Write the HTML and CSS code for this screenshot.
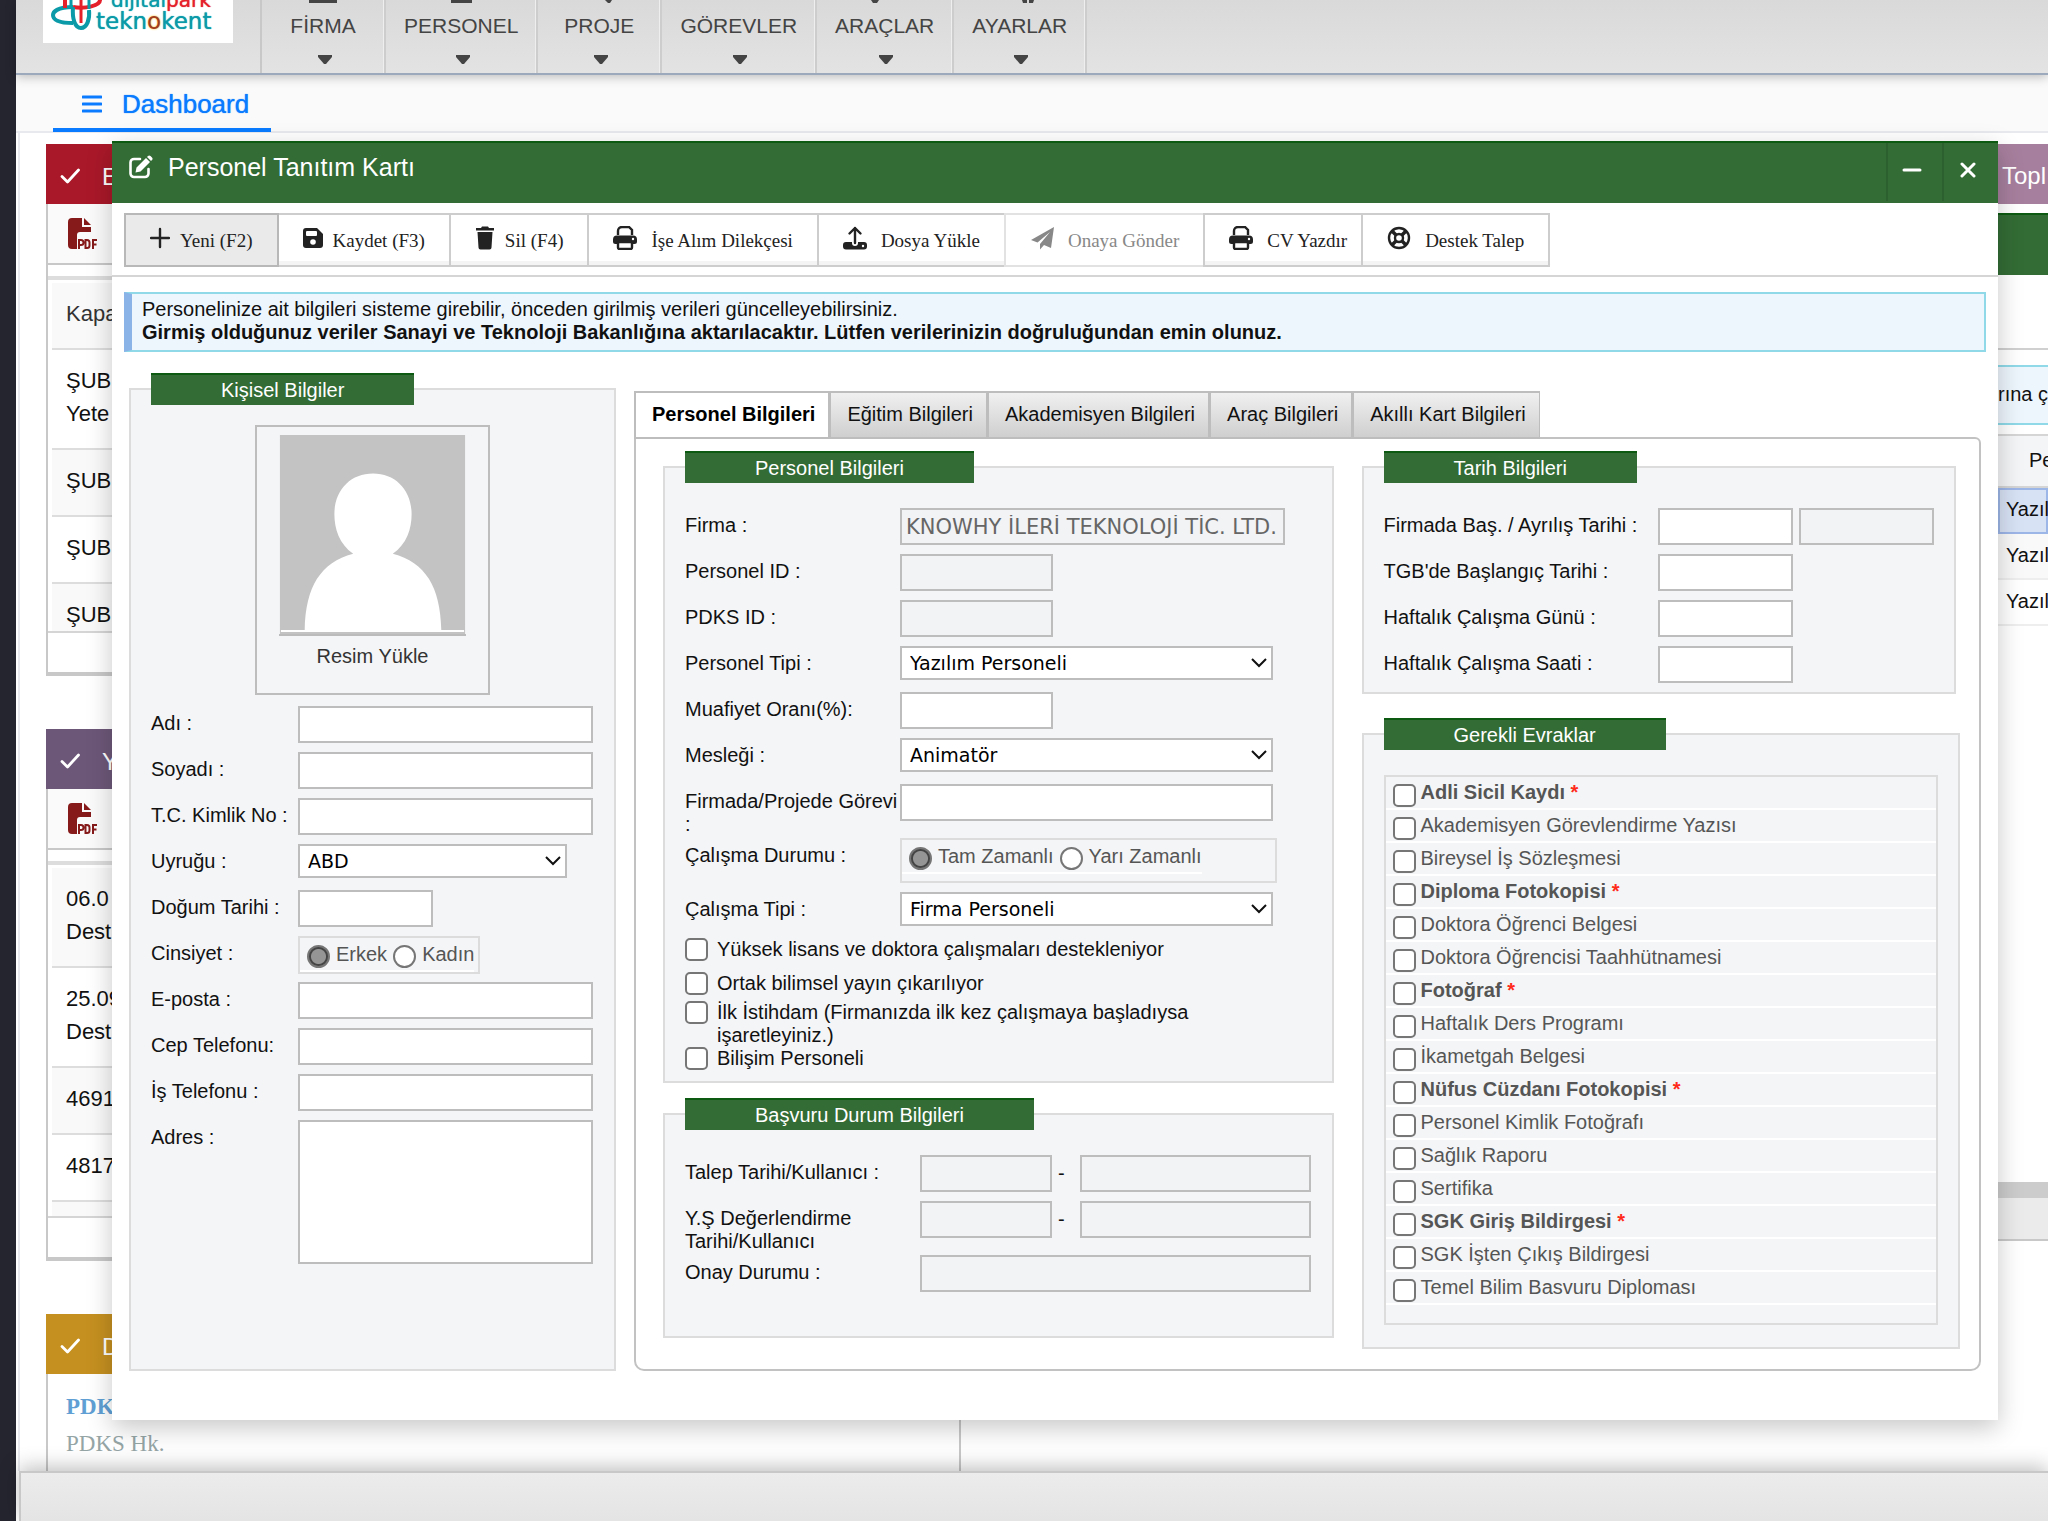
FILE: index.html
```html
<!DOCTYPE html>
<html lang="tr">
<head>
<meta charset="utf-8">
<title>Personel Tanıtım Kartı</title>
<link rel="stylesheet" href="styles.css">
</head>
<body>
<svg class="sprite" aria-hidden="true">
  <symbol id="i-check" viewBox="0 0 20 16"><path d="M2 8.500l5.500 5.500L18.500 2" fill="none" stroke="currentColor" stroke-width="2.800" stroke-linecap="round" stroke-linejoin="round"/></symbol>
  <symbol id="i-printer" viewBox="0 0 24 24"><path d="M5 9V5a4 4 0 0 1 4-4h7l3 3v5" fill="none" stroke="currentColor" stroke-width="2.400"/><path d="M4 9.500h16a4 4 0 0 1 4 4v2a2.500 2.500 0 0 1-2.500 2.500H2.500A2.500 2.500 0 0 1 0 15.500v-2a4 4 0 0 1 4-4z" fill="currentColor"/><rect x="5" y="16" width="14" height="7" rx="1.500" fill="#fff" stroke="currentColor" stroke-width="2.400"/><circle cx="20" cy="13" r="1.200" fill="#fff"/></symbol>
  <symbol id="i-pdf" viewBox="0 0 30 32"><path d="M4 0h10v9h9v5H12a3 3 0 0 0-3 3v14H4a4 4 0 0 1-4-4V4a4 4 0 0 1 4-4z" fill="#861a1a"/><path d="M16 0l7 7h-7z" fill="#861a1a"/><g fill="none" stroke="#861a1a" stroke-width="2"><path d="M11 31v-9h2a2.500 2.500 0 0 1 0 5h-2M17.500 22v8h1.500a2.500 2.500 0 0 0 2.500-2.500v-3a2.500 2.500 0 0 0-2.500-2.500zM25 31v-9h4M25 26.500h3.500"/></g></symbol>
  <symbol id="i-chevron" viewBox="0 0 16 10"><path d="M1 1l7 7 7-7" fill="none" stroke="#111" stroke-width="2"/></symbol>
</svg>

<div class="rail"></div>
<div class="app">
  <header class="topbar">
    <a class="logo" href="#" aria-label="dijitalpark teknokent">
      <svg class="logo-mark" viewBox="0 0 54 32" aria-hidden="true"><g fill="none" stroke-width="4"><path d="M22 7C6 7 2 12 2 15c0 6 9 8 20 8" stroke="#0a9aa8"/><path d="M14 0v8" stroke="#e5202b"/><path d="M22 7c12 2 28-1 27-8" stroke="#e5202b"/><path d="M22 7c-1 12 2 21 8 21s9-9 8-18" stroke="#0a9aa8"/><path d="M30 0v23" stroke="#e5202b" stroke-width="3"/><path d="M20 0v8M38 0v9" stroke="#0a9aa8" stroke-width="3"/></g></svg>
      <span class="logo-name">
        <span class="logo-top">dijital<b>park</b></span>
        <span class="logo-bottom">tekn<i>o</i>kent</span>
      </span>
    </a>
    <nav class="menu">
      <button type="button"><svg class="mi" viewBox="0 0 30 3"><path d="M1 0h28v3H1z"/></svg>FİRMA<svg class="caret" viewBox="0 0 14 9"><path d="M0 0h14v2L8 9H6L0 2z"/></svg></button>
      <button type="button"><svg class="mi" viewBox="0 0 30 3"><path d="M5 0h21v3H5z"/></svg>PERSONEL<svg class="caret" viewBox="0 0 14 9"><path d="M0 0h14v2L8 9H6L0 2z"/></svg></button>
      <button type="button"><svg class="mi" viewBox="0 0 30 3"><path d="M21 0h7l-2 3h-2z"/></svg>PROJE<svg class="caret" viewBox="0 0 14 9"><path d="M0 0h14v2L8 9H6L0 2z"/></svg></button>
      <button type="button"><svg class="mi" viewBox="0 0 30 3"></svg>GÖREVLER<svg class="caret" viewBox="0 0 14 9"><path d="M0 0h14v2L8 9H6L0 2z"/></svg></button>
      <button type="button"><svg class="mi" viewBox="0 0 30 3"><path d="M1 0h8l-2 3H3z"/></svg>ARAÇLAR<svg class="caret" viewBox="0 0 14 9"><path d="M0 0h14v2L8 9H6L0 2z"/></svg></button>
      <button type="button"><svg class="mi" viewBox="0 0 30 3"><path d="M17 0h5v3h-4zM24 0h5l-1 3h-4z"/></svg>AYARLAR<svg class="caret" viewBox="0 0 14 9"><path d="M0 0h14v2L8 9H6L0 2z"/></svg></button>
    </nav>
  </header>

  <div class="pagetabs">
    <a class="pagetab" href="#"><svg class="burger" viewBox="0 0 20 18"><path d="M1 2h18M1 9h18M1 16h18" stroke="currentColor" stroke-width="3" stroke-linecap="round"/></svg>Dashboard</a>
  </div>

  <main class="desk">
    <div class="col-left">
      <section class="card">
        <h2 class="card-head red"><svg class="check"><use href="#i-check"/></svg>E</h2>
        <div class="card-tools"><svg class="pdf"><use href="#i-pdf"/></svg></div>
        <div class="rows">
          <div class="row head">Kapa</div>
          <div class="row tall">ŞUB<br>Yete</div>
          <div class="row alt">ŞUB</div>
          <div class="row">ŞUB</div>
          <div class="row alt">ŞUB</div>
        </div>
        <div class="card-foot"></div>
      </section>
      <section class="card">
        <h2 class="card-head purple"><svg class="check"><use href="#i-check"/></svg>Y</h2>
        <div class="card-tools"><svg class="pdf"><use href="#i-pdf"/></svg></div>
        <div class="rows">
          <div class="row tall alt">06.0<br>Dest</div>
          <div class="row tall">25.09<br>Dest</div>
          <div class="row alt">4691</div>
          <div class="row">4817</div>
          <div class="row alt"></div>
        </div>
        <div class="card-foot"></div>
      </section>
      <section class="card news">
        <h2 class="card-head gold"><svg class="check"><use href="#i-check"/></svg>D</h2>
        <p class="news-title">PDK</p>
        <p class="news-sub">PDKS Hk.</p>
      </section>
    </div>
    <div class="col-right">
      <div class="r-title">Topl</div>
      <div class="r-green"></div>
      <div class="r-bar"></div>
      <div class="r-note">rına ç</div>
      <div class="r-th">Pe</div>
      <div class="r-td sel">Yazıl</div>
      <div class="r-td odd">Yazıl</div>
      <div class="r-td">Yazıl</div>
      <div class="r-scroll"></div>
      <div class="r-foot"></div>
    </div>
  </main>
  <footer class="taskbar"></footer>

  <section class="window" role="dialog" aria-label="Personel Tanıtım Kartı">
    <header class="win-head">
      <svg class="edit" viewBox="0 0 24 24"><path d="M11 4H5a3.500 3.500 0 0 0-3.500 3.500v11A3.500 3.500 0 0 0 5 22h11a3.500 3.500 0 0 0 3.500-3.500V14" fill="none" stroke="#fff" stroke-width="2.600" stroke-linecap="round"/><path d="M17 3l4 4-9.500 9.500-5 1 1-5zM18 2l1-1a1.800 1.800 0 0 1 2.500 0L23 2.500A1.800 1.800 0 0 1 23 5l-1 1z" fill="#fff"/></svg>
      <h1>Personel Tanıtım Kartı</h1>
      <button type="button" aria-label="Küçült"><svg viewBox="0 0 20 16"><path d="M2 8h16" stroke="#fff" stroke-width="3" stroke-linecap="round"/></svg></button>
      <button type="button" aria-label="Kapat"><svg viewBox="0 0 20 16"><path d="M4 2l12 12M16 2L4 14" stroke="#fff" stroke-width="3" stroke-linecap="round"/></svg></button>
    </header>

    <div class="toolbar">
      <button type="button" class="small on"><svg viewBox="0 0 20 24"><path d="M10 3v18M1 12h18" stroke="currentColor" stroke-width="2.400" stroke-linecap="round"/></svg>Yeni (F2)</button>
      <button type="button" class="small"><svg viewBox="0 0 20 24"><path d="M3 2h11l6 6v11a3 3 0 0 1-3 3H3a3 3 0 0 1-3-3V5a3 3 0 0 1 3-3z" fill="currentColor"/><rect x="3" y="5" width="11" height="5" rx="1" fill="#fff"/><circle cx="10" cy="16" r="2.800" fill="#fff"/></svg>Kaydet (F3)</button>
      <button type="button" class="small"><svg viewBox="0 0 20 24"><path d="M1 2h5l1-1.500h6L14 2h5v2.500H1zM2.500 6h15l-1 15.500a2 2 0 0 1-2 2h-9a2 2 0 0 1-2-2z" fill="currentColor"/></svg>Sil (F4)</button>
      <button type="button"><svg viewBox="0 0 24 24"><use href="#i-printer"/></svg>İşe Alım Dilekçesi</button>
      <button type="button"><svg viewBox="0 0 24 24"><path d="M12 17V2M6.500 7.500L12 2l5.500 5.500" fill="none" stroke="currentColor" stroke-width="2.400" stroke-linecap="round" stroke-linejoin="round"/><path d="M3 16h6v1a3 3 0 0 0 6 0v-1h6a3 3 0 0 1 3 3v1.500a3 3 0 0 1-3 3H3a3 3 0 0 1-3-3V19a3 3 0 0 1 3-3z" fill="currentColor"/><circle cx="20" cy="20" r="1.200" fill="#fff"/></svg>Dosya Yükle</button>
      <button type="button" disabled><svg viewBox="0 0 24 24"><path d="M24 1l-3 21-7-3-4 4.500V18L20 6 7.500 16.500 1 14z" fill="currentColor"/></svg>Onaya Gönder</button>
      <button type="button" class="tight"><svg viewBox="0 0 24 24"><use href="#i-printer"/></svg>CV Yazdır</button>
      <button type="button"><svg viewBox="0 0 24 24"><g fill="none" stroke="currentColor" stroke-width="2.400"><circle cx="12" cy="12" r="10"/><circle cx="12" cy="12" r="4"/><path d="M5 5l4 4M19 5l-4 4M5 19l4-4M19 19l-4-4" stroke-width="3.500"/></g></svg>Destek Talep</button>
    </div>

    <form class="win-body">
      <div class="note">Personelinize ait bilgileri sisteme girebilir, önceden girilmiş verileri güncelleyebilirsiniz.<br><b>Girmiş olduğunuz veriler Sanayi ve Teknoloji Bakanlığına aktarılacaktır. Lütfen verilerinizin doğruluğundan emin olunuz.</b></div>

      <div class="columns">
        <fieldset class="group person">
          <legend>Kişisel Bilgiler</legend>
          <div class="photo">
            <svg viewBox="0 0 187 201" aria-hidden="true"><rect width="187" height="201" fill="#c3c3c3"/><path d="M25 197c1-44 16-68 49-77-14-10-19-25-19-40 0-24 16-41 39-41s39 17 39 41c0 15-5 30-19 40 33 9 48 33 49 77z" fill="#fff"/><path d="M1 198h185" stroke="#fff" stroke-width="2"/></svg>
            <span>Resim Yükle</span>
          </div>
          <div class="line"><label for="ad">Adı :</label><input id="ad" class="w-full" type="text"></div>
          <div class="line"><label for="soyad">Soyadı :</label><input id="soyad" class="w-full" type="text"></div>
          <div class="line"><label for="tc">T.C. Kimlik No :</label><input id="tc" class="w-full" type="text"></div>
          <div class="line"><label for="uyruk">Uyruğu :</label><span class="select w-country"><select id="uyruk"><option>ABD</option></select><svg><use href="#i-chevron"/></svg></span></div>
          <div class="line"><label for="dogum">Doğum Tarihi :</label><input id="dogum" class="w-date" type="text"></div>
          <div class="line"><span class="lbl">Cinsiyet :</span><span class="radios"><span><label><input type="radio" name="cins" checked>Erkek</label><label><input type="radio" name="cins">Kadın</label></span></span></div>
          <div class="line"><label for="eposta">E-posta :</label><input id="eposta" class="w-full" type="text"></div>
          <div class="line"><label for="cep">Cep Telefonu:</label><input id="cep" class="w-full" type="text"></div>
          <div class="line"><label for="istel">İş Telefonu :</label><input id="istel" class="w-full" type="text"></div>
          <div class="line"><label for="adres">Adres :</label><textarea id="adres" class="w-full"></textarea></div>
        </fieldset>

        <div class="tabs">
          <div class="tablist" role="tablist">
            <button type="button" role="tab" aria-selected="true">Personel Bilgileri</button>
            <button type="button" role="tab">Eğitim Bilgileri</button>
            <button type="button" role="tab">Akademisyen Bilgileri</button>
            <button type="button" role="tab">Araç Bilgileri</button>
            <button type="button" role="tab">Akıllı Kart Bilgileri</button>
          </div>
          <div class="tabpanel" role="tabpanel">
            <div class="stack">
              <fieldset class="group staff">
                <legend>Personel Bilgileri</legend>
                <div class="line"><label for="firma">Firma :</label><input id="firma" class="w-firm" type="text" value="KNOWHY İLERİ TEKNOLOJİ TİC. LTD." disabled></div>
                <div class="line"><label for="pid">Personel ID :</label><input id="pid" class="w-id" type="text" disabled></div>
                <div class="line"><label for="pdks">PDKS ID :</label><input id="pdks" class="w-id" type="text" disabled></div>
                <div class="line"><label for="tip">Personel Tipi :</label><span class="select w-wide"><select id="tip"><option>Yazılım Personeli</option></select><svg><use href="#i-chevron"/></svg></span></div>
                <div class="line"><label for="muaf">Muafiyet Oranı(%):</label><input id="muaf" class="w-id" type="text"></div>
                <div class="line"><label for="meslek">Mesleği :</label><span class="select w-wide"><select id="meslek"><option>Animatör</option></select><svg><use href="#i-chevron"/></svg></span></div>
                <div class="line"><label for="gorev">Firmada/Projede Görevi :</label><input id="gorev" class="w-wide" type="text"></div>
                <div class="line"><span class="lbl">Çalışma Durumu :</span><span class="radios roomy"><span><label><input type="radio" name="durum" checked>Tam Zamanlı</label><label><input type="radio" name="durum">Yarı Zamanlı</label></span></span></div>
                <div class="line"><label for="ctip">Çalışma Tipi :</label><span class="select w-wide"><select id="ctip"><option>Firma Personeli</option></select><svg><use href="#i-chevron"/></svg></span></div>
                <label class="tick spaced"><input type="checkbox"><span>Yüksek lisans ve doktora çalışmaları destekleniyor</span></label>
                <label class="tick close"><input type="checkbox"><span>Ortak bilimsel yayın çıkarılıyor</span></label>
                <label class="tick"><input type="checkbox"><span>İlk İstihdam (Firmanızda ilk kez çalışmaya başladıysa işaretleyiniz.)</span></label>
                <label class="tick"><input type="checkbox"><span>Bilişim Personeli</span></label>
              </fieldset>

              <fieldset class="group status">
                <legend>Başvuru Durum Bilgileri</legend>
                <div class="line"><label for="talep">Talep Tarihi/Kullanıcı :</label><span class="pair"><input id="talep" class="w-day" type="text" disabled><span>-</span><input class="w-user" type="text" aria-label="Talep kullanıcı" disabled></span></div>
                <div class="line"><label for="deger">Y.Ş Değerlendirme Tarihi/Kullanıcı</label><span class="pair"><input id="deger" class="w-day" type="text" disabled><span>-</span><input class="w-user" type="text" aria-label="Değerlendirme kullanıcı" disabled></span></div>
                <div class="line"><label for="onay">Onay Durumu :</label><input id="onay" class="w-approve" type="text" disabled></div>
              </fieldset>
            </div>

            <div class="stack dates-docs">
              <fieldset class="group dates">
                <legend>Tarih Bilgileri</legend>
                <div class="line"><label for="bas">Firmada Baş. / Ayrılış Tarihi :</label><span class="two"><input id="bas" class="w-date" type="text"><input class="w-date" type="text" aria-label="Ayrılış Tarihi" disabled></span></div>
                <div class="line"><label for="tgb">TGB'de Başlangıç Tarihi :</label><input id="tgb" class="w-date" type="text"></div>
                <div class="line"><label for="gun">Haftalık Çalışma Günü :</label><input id="gun" class="w-date" type="text"></div>
                <div class="line"><label for="saat">Haftalık Çalışma Saati :</label><input id="saat" class="w-date" type="text"></div>
              </fieldset>

              <fieldset class="group docs">
                <legend>Gerekli Evraklar</legend>
                <div class="doclist">
                  <label><input type="checkbox"><b>Adli Sicil Kaydı <i>*</i></b></label>
                  <label><input type="checkbox">Akademisyen Görevlendirme Yazısı</label>
                  <label><input type="checkbox">Bireysel İş Sözleşmesi</label>
                  <label><input type="checkbox"><b>Diploma Fotokopisi <i>*</i></b></label>
                  <label><input type="checkbox">Doktora Öğrenci Belgesi</label>
                  <label><input type="checkbox">Doktora Öğrencisi Taahhütnamesi</label>
                  <label><input type="checkbox"><b>Fotoğraf <i>*</i></b></label>
                  <label><input type="checkbox">Haftalık Ders Programı</label>
                  <label><input type="checkbox">İkametgah Belgesi</label>
                  <label><input type="checkbox"><b>Nüfus Cüzdanı Fotokopisi <i>*</i></b></label>
                  <label><input type="checkbox">Personel Kimlik Fotoğrafı</label>
                  <label><input type="checkbox">Sağlık Raporu</label>
                  <label><input type="checkbox">Sertifika</label>
                  <label><input type="checkbox"><b>SGK Giriş Bildirgesi <i>*</i></b></label>
                  <label><input type="checkbox">SGK İşten Çıkış Bildirgesi</label>
                  <label><input type="checkbox">Temel Bilim Basvuru Diploması</label>
                </div>
              </fieldset>
            </div>
          </div>
        </div>
      </div>
    </form>
  </section>
</div>
</body>
</html>
```
FILE: styles.css
```css
* { box-sizing: border-box; }

body {
  margin: 0;
  display: flex;
  height: 100vh;
  overflow: hidden;
  background: #fff;
  color: #111;
  font: 20px/23px "Liberation Sans", Arial, sans-serif;
}

button, input, select, textarea { font: inherit; color: inherit; margin: 0; }
h1, h2, p { margin: 0; font-weight: 400; }
svg { display: block; flex: none; }
.sprite { display: none; }

.rail { width: 16px; flex: none; background: #252530; }
.app { position: relative; flex: 1; min-width: 0; display: flex; flex-direction: column; }

/* top menu */
.topbar {
  display: flex;
  height: 75px;
  flex: none;
  position: relative;
  background: linear-gradient(#d9d9d9, #e3e3e3);
  border-bottom: 2px solid #9ca8bc;
  box-shadow: 0 2px 10px rgba(0, 0, 0, .25);
}
.logo {
  display: flex;
  width: 190px;
  height: 43px;
  margin: 0 27px;
  padding-left: 8px;
  overflow: hidden;
  background: #fff;
  color: #0a9aa8;
  text-decoration: none;
  font-family: "DejaVu Sans", Verdana, sans-serif;
}
.logo-mark { width: 54px; height: 32px; }
.logo-name { display: flex; flex-direction: column; justify-content: flex-end; height: 32px; margin-left: -9px; text-shadow: 0 0 1px currentColor; }
.logo-top { font-size: 20px; line-height: 20px; margin-left: 15px; }
.logo-top b { font-weight: 400; color: #e5202b; }
.logo-bottom { font-size: 23px; line-height: 22px; }
.logo-bottom i { font-style: normal; color: #a03a20; text-shadow: 0 0 2px #f3b200; }
.menu { display: flex; border-left: 2px solid #c8c8c8; }
.menu button {
  display: flex;
  flex-direction: column;
  align-items: center;
  min-width: 124px;
  padding: 0 18px;
  border: 0;
  border-right: 2px solid #cdcdcd;
  box-shadow: inset -1px 0 #eee;
  background: none;
  color: #444;
  font-size: 21px;
  line-height: 24px;
}
.menu svg { fill: #444; }
.mi { width: 30px; height: 3px; margin-bottom: 11px; }
.caret { width: 14px; height: 9px; margin: 17px 0 0 3px; }

.pagetabs { height: 58px; flex: none; padding-left: 37px; background: #fafafa; border-bottom: 2px solid #e8e9ee; }
.pagetab {
  display: inline-flex;
  align-items: center;
  gap: 20px;
  height: 57px;
  padding: 5px 22px 0 29px;
  border-bottom: 4px solid #0a7bff;
  color: #0a7bff;
  font-size: 26px;
  line-height: 28px;
  text-decoration: none;
  text-shadow: 0 0 1px #0a7bff;
}
.burger { width: 20px; height: 18px; }

/* windows behind the dialog */
.desk {
  flex: 1;
  min-height: 0;
  display: flex;
  justify-content: space-between;
  overflow: hidden;
  margin-left: 2px;
  padding: 11px 0 0 26px;
  border-left: 2px solid #e8e9ee;
}
.col-left { flex: 0 0 915px; display: flex; flex-direction: column; gap: 53px; font-size: 22px; line-height: 33px; }
.card { border: 2px solid #c8c8c8; border-top: 0; border-bottom-width: 4px; background: #fff; }
.news { flex: none; height: 220px; }
.card-head { display: flex; align-items: center; gap: 22px; height: 60px; margin: 0 -2px; padding: 4px 14px 0; color: #fff; font-size: 24px; }
.red { background: #a91829; }
.purple { background: #6d5779; }
.gold { background: #c59020; }
.check { width: 20px; height: 16px; }
.card-tools { height: 61px; padding: 14px 20px; background: #fafafa; border-bottom: 2px solid #c8c8c8; }
.pdf { width: 30px; height: 32px; }
.rows { margin-top: 11px; padding: 3px 0 0 4px; border-top: 4px solid #ddd; height: 357px; overflow: hidden; border-bottom: 2px solid #d5d5d5; }
.row { height: 67px; padding: 14px 14px; border-bottom: 2px solid #ddd; background: #fff; }
.tall { height: 100px; }
.alt, .head { background: #f9f9f9; }
.head { color: #333; }
.card-foot { height: 39px; }
.news-title, .news-sub { padding-left: 18px; font-family: "Liberation Serif", "Times New Roman", serif; font-size: 23px; line-height: 37px; }
.news-title { padding-top: 14px; color: #5f9fd4; font-weight: 700; }
.news-sub { color: #95a5a6; }

.col-right { width: 50px; overflow: hidden; white-space: nowrap; }
.r-title { height: 60px; padding: 16px 4px; background: #a77f9e; color: #fff; font-size: 24px; line-height: 32px; }
.r-green { height: 62px; margin-top: 9px; background: #336c35; border-top: 2px solid #0d5a12; }
.r-bar { height: 75px; border-bottom: 2px solid #d0d0d0; }
.r-note { height: 60px; margin: 15px 0 9px; padding: 16px 0; background: #eef6fd; border: solid #8fd9e8; border-width: 2px 0; }
.r-th { height: 54px; padding: 13px 0 13px 31px; background: #f4f5f7; border: solid #d5d5d5; border-width: 2px 0; }
.r-td { height: 46px; padding: 10px 8px; border-bottom: 2px solid #eee; }
.odd { background: #f9f9f9; }
.sel { background: #d7e2f5; border: 2px solid #9db6e8; padding: 8px 6px; }
.r-scroll { height: 16px; margin-top: 556px; background: #ccc; }
.r-foot { height: 43px; background: #ebebeb; border-bottom: 2px solid #c8c8c8; }

.taskbar {
  position: relative;
  height: 50px;
  flex: none;
  margin-left: 3px;
  background: linear-gradient(#ececec, #e4e4e4);
  border: solid #c8c8c8;
  border-width: 2px 0 0 2px;
  box-shadow: 0 -4px 20px rgba(0, 0, 0, .25);
}

/* dialog */
.window {
  position: absolute;
  top: 141px;
  left: 96px;
  right: 50px;
  background: #fff;
  box-shadow: 0 8px 24px rgba(0, 0, 0, .22);
}
.win-head { display: flex; height: 62px; padding-left: 17px; background: #336c35; border-top: 2px solid #0d5a12; color: #fff; }
.edit { width: 24px; height: 24px; margin: 12px 15px 0 0; }
.win-head h1 { flex: 1; padding-top: 9px; font-size: 25px; line-height: 30px; }
.win-head button { display: flex; align-items: center; width: 56px; height: 58px; padding: 0 14px 4px; border: 0; border-left: 2px solid #2d602f; background: none; }
.win-head button svg { width: 20px; height: 16px; }

.toolbar { display: flex; padding: 10px 12px 8px; border-bottom: 2px solid #d5d5d5; }
.toolbar button {
  display: flex;
  align-items: center;
  gap: 14px;
  height: 54px;
  padding: 0 24px;
  margin-right: -2px;
  border: 2px solid #cdcdcd;
  background: #fff;
  box-shadow: inset 0 -4px #f4f4f4;
  color: #222;
  font-family: "Liberation Serif", "Times New Roman", serif;
  font-size: 19px;
  white-space: nowrap;
}
.toolbar svg { width: 24px; height: 24px; margin-bottom: 4px; }
.toolbar .small { gap: 10px; }
.toolbar .small svg { width: 20px; }
.toolbar .on { background: #eaeaea; border-color: #b8b8b8; box-shadow: none; position: relative; }
.toolbar .tight { padding-right: 14px; }
.toolbar button:disabled { color: #888; border-color: #e2e2e2; box-shadow: none; }

.win-body { padding: 15px 12px 49px; }
.note { padding: 4px 10px 6px; border: 2px solid #8fd9e8; border-left: 8px solid #8ab4e8; background: #eef6fd; min-height: 60px; }
.columns { display: grid; grid-template-columns: 487fr 1347fr; gap: 18px; padding: 21px 5px 0; }

.group { min-width: 0; margin: 0; padding: 25px 0 0 20px; border: 2px solid #dcdcdc; background: #f4f5f7; }
.group legend { height: 32px; padding: 2px 70px 0; border-top: 2px solid #0d5a12; background: #336c35; color: #fff; line-height: 26px; }
.person { padding-top: 20px; }
.photo {
  display: flex;
  flex-direction: column;
  align-items: center;
  gap: 9px;
  width: 235px;
  height: 270px;
  margin: 0 0 11px 104px;
  padding-top: 8px;
  border: 2px solid #bdbdbd;
  color: #333;
}
.photo svg { width: 187px; height: 201px; border-bottom: 2px solid #bbb; }

.line { display: flex; align-items: flex-start; min-height: 46px; }
.line > label, .lbl { flex: none; width: 147px; padding: 6px 0 2px; }
.staff .line > label, .staff .lbl { width: 215px; }
.status .line > label { width: 235px; padding-right: 40px; }
.dates .line > label { width: 274px; }

input[type="text"], textarea, select {
  height: 37px;
  padding: 0 4px;
  border: 2px solid #bdbdbd;
  border-radius: 0;
  background: #fff;
  font-family: "DejaVu Sans", Verdana, sans-serif;
  font-size: 21px;
}
textarea { resize: none; display: block; }
#adres { height: 144px; }
input[type="text"]:disabled { background: #f2f3f5; color: #666; }
.select { display: grid; align-items: center; }
.select select { grid-area: 1 / 1; width: 100%; height: 34px; padding: 0 8px; appearance: none; font-size: 19px; color: #000; }
.select svg { grid-area: 1 / 1; justify-self: end; width: 16px; height: 10px; margin-right: 6px; pointer-events: none; }
.w-full { width: 295px; }
.w-country { width: 269px; }
.w-date { width: 135px; }
.w-id { width: 153px; }
.w-firm { width: 385px; }
.w-wide { width: 373px; }
.w-day { width: 132px; }
.w-user { width: 231px; }
.w-approve { width: 391px; }
.pair, .two { display: flex; align-items: center; }
.two { gap: 6px; }
.pair span { width: 28px; padding-left: 6px; }

input[type="radio"], input[type="checkbox"] {
  appearance: none;
  flex: none;
  width: 23px;
  height: 23px;
  border: 2px solid #767676;
  background: #fff;
}
input[type="checkbox"] { border-radius: 5px; }
input[type="radio"] { border-radius: 50%; }
input[type="radio"]:checked { background: radial-gradient(circle, #959595 7px, #444 8px); }
.radios { height: 38px; padding-right: 4px; border: 2px solid #dcdcdc; color: #555; }
.radios > span { display: flex; gap: 6px; min-height: 34px; padding: 5px 0 0 7px; border-bottom: 2px solid #fff; }
.radios label { display: flex; gap: 6px; line-height: 22px; }
.radios input { margin-top: 2px; }
.roomy { display: flex; align-items: flex-start; width: 377px; height: 45px; margin-bottom: 9px; }

.staff { padding-bottom: 11px; }
.tick { display: flex; gap: 9px; max-width: 512px; }
.spaced { margin-bottom: 11px; }
.close { margin-bottom: 6px; }

/* tab strip and panel */
.tabs { display: flex; flex-direction: column; min-width: 0; }
.tablist { display: flex; height: 48px; margin: 18px 0 -2px; position: relative; }
.tablist button {
  padding: 0 13px 2px 16px;
  border: 2px solid #bdbdbd;
  border-right-width: 1px;
  background: linear-gradient(#f0f0f0, #cfcfcf);
  color: #111;
  white-space: nowrap;
}
.tablist button[aria-selected="true"] { background: #fff; font-weight: 700; color: #000; }
.tabpanel {
  flex: 1;
  display: grid;
  grid-template-columns: 670fr 598fr;
  align-items: start;
  gap: 28px;
  padding: 12px 19px 20px 27px;
  border: 2px solid #c2c2c2;
  border-radius: 0 6px 10px 10px;
}
.stack { display: flex; flex-direction: column; gap: 15px; min-width: 0; }
.dates-docs { gap: 24px; }
.dates { margin-right: 4px; }
.status { padding-bottom: 35px; }
.docs { padding: 25px 20px 22px 20px; }
.doclist { padding-bottom: 18px; border: 2px solid #dcdcdc; color: #555; }
.doclist label { display: flex; gap: 5px; height: 33px; padding: 2px 0 0 7px; border-bottom: 2px solid #fff; line-height: 26px; }
.doclist input { margin-top: 5px; }
.doclist i { font-style: normal; color: #ff2a1a; }
```
